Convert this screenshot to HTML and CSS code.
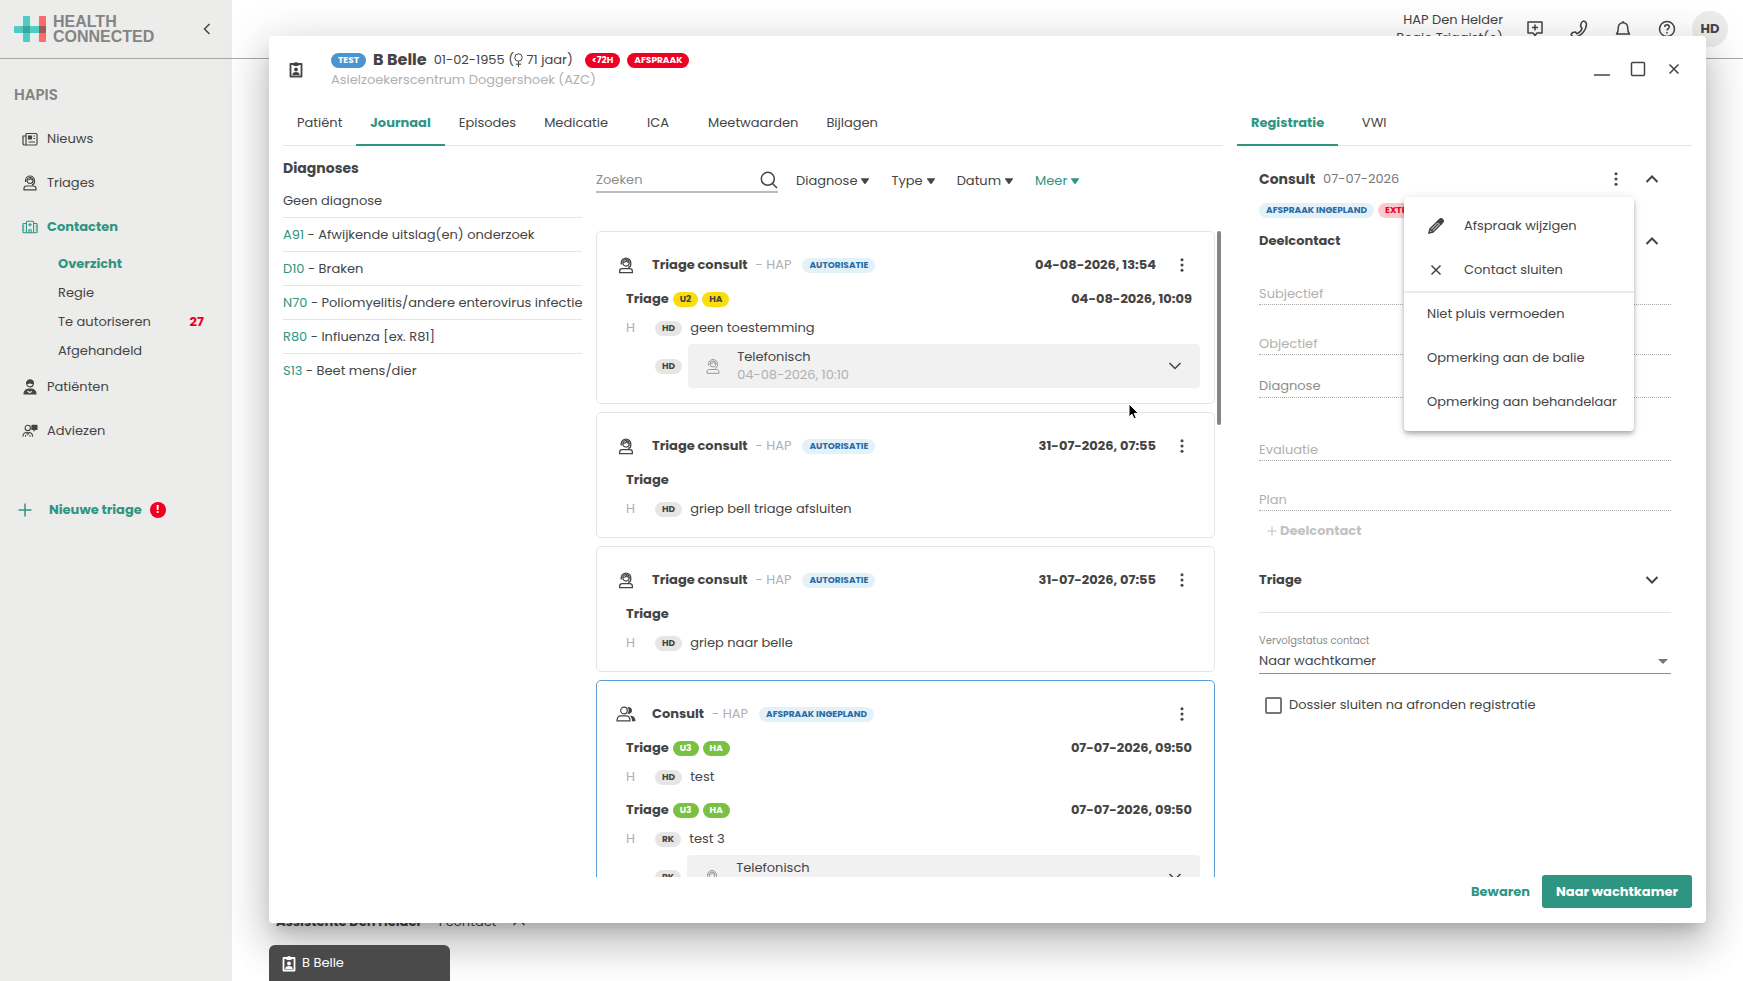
FILE: index.html
```html
<!DOCTYPE html>
<html lang="nl">
<head>
  <meta charset="UTF-8">
  <title>HAPIS - Contacten</title>
  <meta name="viewport" content="width=device-width, initial-scale=1.0">
  <link rel="stylesheet" href="styles.css">
</head>
<body>

  <!-- iconen -->
  <svg class="sprite" aria-hidden="true">
    <symbol id="i-news" viewBox="0 0 16 16"><path d="M4 2.500h10a1 1 0 0 1 1 1v9a1.500 1.500 0 0 1-1.500 1.500H2.500A1.500 1.500 0 0 1 1 12.500V5h3M4 2.500v10a1.500 1.500 0 0 1-1.500 1.500"/><path d="M6.500 5h3v3h-3z" fill="currentColor"/><path d="M11.500 5H13M11.500 7.500H13M6.500 11H13"/></symbol>
    <symbol id="i-agent" viewBox="0 0 16 16"><circle cx="8" cy="5.500" r="3"/><path d="M3.500 7V5.500a4.500 4.500 0 0 1 9 0V7c0 1.500-1 2.500-2.500 2.800M5.200 5C7 5 8 4.500 8.500 3.500c.5 1 1.200 1.500 2.300 1.500M2 14.800v-1.300c0-1.600 1-2.500 2.500-2.500h7c1.500 0 2.500.9 2.500 2.500v1.300z"/></symbol>
    <symbol id="i-hospital" viewBox="0 0 18 16"><path d="M5 14.500v-12a1 1 0 0 1 1-1h6a1 1 0 0 1 1 1v12M5 4H2a1 1 0 0 0-1 1v8.500a1 1 0 0 0 1 1h14a1 1 0 0 0 1-1V5a1 1 0 0 0-1-1h-3M9 3.500v4M7 5.500h4M7.800 14.500V11h2.400v3.500M1 7h1.500M1 9.500h1.500M1 12h1.500M17 7h-1.500M17 9.500h-1.500M17 12h-1.500"/></symbol>
    <symbol id="i-patient" viewBox="0 0 16 16"><circle cx="8" cy="4.500" r="3.300"/><path d="M4.700 4.500C4.700 2.400 6 1.200 8 1.200s3.300 1.200 3.300 3.300C9 4.500 8 3.500 8 3c0 .6-1.500 1.500-3.300 1.500z" fill="currentColor"/><path d="M2 15c0-3 2-5 6-5s6 2 6 5z" fill="currentColor"/><path d="M5.500 12l2 1.500 2.500-1" stroke="#ececea"/></symbol>
    <symbol id="i-advice" viewBox="0 0 18 16"><circle cx="6.500" cy="4.500" r="3"/><path d="M1 14.500c0-3 1.800-5 5.500-5s5.500 2 5.500 5M4 14.500v-2M9 14.500v-2M5 10l1.500 2L8 10"/><path d="M11.500 1h5a1 1 0 0 1 1 1v4a1 1 0 0 1-1 1H15l-2 2V7h-1.500a1 1 0 0 1-1-1V2a1 1 0 0 1 1-1z" fill="currentColor" stroke="none"/></symbol>
    <symbol id="i-badge" viewBox="0 0 14 17"><path d="M1.500 3h11v12.500h-11z" stroke-width="1.800" stroke-linejoin="round"/><path d="M4.500 1.800h1.200a1.500 1.500 0 0 1 2.600 0h1.200V5h-5z" fill="currentColor" stroke="none"/><circle cx="7" cy="8.500" r="1.900" fill="currentColor" stroke="none"/><path d="M3.300 14c0-2 1.300-3 3.700-3s3.700 1 3.700 3z" fill="currentColor" stroke="none"/></symbol>
    <symbol id="i-people" viewBox="0 0 20 16"><circle cx="8" cy="4.500" r="3.300"/><path d="M1 14.800c0-3.500 1.500-5 4-5h5c2.500 0 4 1.500 4 5z"/><path d="M11.500 1c2.500-.3 4.500 1 4.500 3.500S14 8.300 11.500 8c1.500-2 1.500-5 0-7zM14 9.800c3.500 0 5.500 1.800 5.500 5.500H16c0-2.500-.5-4-2-5.500z" fill="currentColor" stroke="none"/></symbol>
    <symbol id="i-up" viewBox="0 0 14 8"><path d="M1.500 7L7 1.500 12.500 7"/></symbol>
    <symbol id="i-down" viewBox="0 0 14 8"><path d="M1.500 1L7 6.500 12.500 1"/></symbol>
    <symbol id="i-left" viewBox="0 0 8 14"><path d="M6.500 2L1.500 7l5 5"/></symbol>
    <symbol id="i-dots" viewBox="0 0 4 14"><g fill="currentColor" stroke="none"><circle cx="2" cy="1.700" r="1.500"/><circle cx="2" cy="7" r="1.500"/><circle cx="2" cy="12.300" r="1.500"/></g></symbol>
    <symbol id="i-close" viewBox="0 0 12 12"><path d="M1.500 1.500l9 9M10.500 1.500l-9 9"/></symbol>
    <symbol id="i-plus" viewBox="0 0 14 14"><path d="M7 .5v13M.5 7h13"/></symbol>
    <symbol id="i-search" viewBox="0 0 18 18"><circle cx="7.800" cy="7.800" r="6.500"/><path d="M12.500 12.500l4.500 4.500"/></symbol>
    <symbol id="i-caret" viewBox="0 0 8 6"><path d="M0 .5h8L4.600 5.500a.8.8 0 0 1-1.200 0z" fill="currentColor" stroke="currentColor" stroke-width=".5"/></symbol>
    <symbol id="i-pencil" viewBox="0 0 16 16"><path d="M1 15l1-4 8-8 3 3-8 8zM4 12l6.500-6.500M2 11l3 3"/><path d="M10 3l1.500-1.500a2 2 0 0 1 3 3L13 6z" fill="currentColor"/></symbol>
    <symbol id="i-message" viewBox="0 0 18 18"><path d="M2 2h14v11h-5l-2 2.500L7 13H2zM9 4.500v6M6 7.500h6" stroke-linejoin="round"/></symbol>
    <symbol id="i-phone" viewBox="0 0 18 18"><path d="M11.500 2.500l2-1.500c1.500.3 2.800 1.500 3 3C16 11 11 16.500 4 17c-1.500-.3-2.500-1.300-3-2.500l1.500-2 3-.5 1.500 1.800c2.500-1 4.200-3 5-5.300L10.500 6z" stroke-linejoin="round"/></symbol>
    <symbol id="i-bell" viewBox="0 0 18 18"><path d="M9 1v1.500M2.500 14c1.500-1.500 1.800-3 1.800-6A4.700 4.700 0 0 1 9 2.800 4.700 4.700 0 0 1 13.700 8c0 3 .3 4.500 1.800 6zM7 16.500c1 .8 3 .8 4 0" stroke-linejoin="round"/></symbol>
    <symbol id="i-help" viewBox="0 0 18 18"><circle cx="9" cy="9" r="7.500"/><path d="M6.700 7c0-3 4.600-3 4.600 0 0 1.500-2.300 1.800-2.300 3.500M9 12v1.500"/></symbol>
  </svg>

  <div class="app">
    <aside class="sidebar">
      <div class="brand">
        <svg class="logo" viewBox="0 0 33 26">
          <rect x="9" width="7" height="26" rx="1" fill="#4ecdc4"/>
          <rect x="25" width="7" height="26" rx="1" fill="#fb6a6c"/>
          <rect y="10" width="32" height="7" rx="1" fill="#4ecdc4"/>
          <rect x="9" y="10" width="7" height="7" fill="#3ba699"/>
          <rect x="25" y="10" width="7" height="7" fill="#a1595b"/>
        </svg>
        <span class="brand-name">HEALTH<br>CONNECTED</span>
        <button class="icon-btn collapse" aria-label="Menu inklappen"><svg width="8" height="14"><use href="#i-left"/></svg></button>
      </div>
      <h1>HAPIS</h1>
      <nav>
        <a class="nav-item" href="#"><svg width="16" height="16"><use href="#i-news"/></svg>Nieuws</a>
        <a class="nav-item" href="#"><svg width="16" height="16"><use href="#i-agent"/></svg>Triages</a>
        <a class="nav-item active" href="#"><svg width="16" height="16"><use href="#i-hospital"/></svg>Contacten</a>
        <a class="nav-sub active" href="#">Overzicht</a>
        <a class="nav-sub" href="#">Regie</a>
        <a class="nav-sub" href="#">Te autoriseren <b>27</b></a>
        <a class="nav-sub" href="#">Afgehandeld</a>
        <a class="nav-item" href="#"><svg width="16" height="16"><use href="#i-patient"/></svg>Patiënten</a>
        <a class="nav-item" href="#"><svg width="16" height="16"><use href="#i-advice"/></svg>Adviezen</a>
      </nav>
      <button class="new-triage"><svg width="14" height="14"><use href="#i-plus"/></svg>Nieuwe triage <span class="alert">!</span></button>
    </aside>

    <main class="main">
      <header class="topbar">
        <div class="user">HAP Den Helder<br>Regie Triagist(e)</div>
        <button class="icon-btn" aria-label="Bericht"><svg width="18" height="18"><use href="#i-message"/></svg></button>
        <button class="icon-btn" aria-label="Telefoon"><svg width="18" height="18"><use href="#i-phone"/></svg></button>
        <button class="icon-btn" aria-label="Meldingen"><svg width="18" height="18"><use href="#i-bell"/></svg></button>
        <button class="icon-btn" aria-label="Help"><svg width="18" height="18"><use href="#i-help"/></svg></button>
        <button class="avatar">HD</button>
      </header>
      <div class="group"><strong>Assistente Den Helder</strong><span>1 contact</span><svg width="14" height="8"><use href="#i-up"/></svg></div>
      <div class="taskbar">
        <button class="task"><svg width="14" height="17"><use href="#i-badge"/></svg>B Belle</button>
      </div>
    </main>
  </div>

  <section class="dialog" role="dialog" aria-label="Dossier B Belle">
    <header class="dialog-head">
      <svg width="14" height="17"><use href="#i-badge"/></svg>
      <div class="patient">
        <div class="patient-line">
          <span class="pill test">TEST</span>
          <h2>B Belle</h2>
          <span class="birth">01-02-1955 (<svg width="9" height="15" viewBox="0 0 9 15"><circle cx="4.500" cy="4.500" r="3.700"/><path d="M4.500 8.200V14M1.800 11.200h5.400"/></svg> 71 jaar)</span>
          <span class="pill red">&lt;72H</span>
          <span class="pill red">AFSPRAAK</span>
        </div>
        <p class="address">Asielzoekerscentrum Doggershoek (AZC)</p>
      </div>
      <div class="window-btns">
        <button class="icon-btn" aria-label="Minimaliseren"><svg width="16" height="16" viewBox="0 0 16 16"><path d="M0 14h16"/></svg></button>
        <button class="icon-btn" aria-label="Maximaliseren"><svg width="16" height="16" viewBox="0 0 16 16"><rect x="1.500" y="1.500" width="13" height="13" rx="1"/></svg></button>
        <button class="icon-btn" aria-label="Sluiten"><svg width="12" height="12"><use href="#i-close"/></svg></button>
      </div>
    </header>

    <div class="dialog-body">
      <div class="dossier">
        <div class="tabs">
          <button class="tab">Patiënt</button>
          <button class="tab active">Journaal</button>
          <button class="tab">Episodes</button>
          <button class="tab">Medicatie</button>
          <button class="tab">ICA</button>
          <button class="tab">Meetwaarden</button>
          <button class="tab">Bijlagen</button>
        </div>
        <div class="journal">
          <div class="diagnoses">
            <h3>Diagnoses</h3>
            <ul>
              <li>Geen diagnose</li>
              <li><a href="#">A91</a> - Afwijkende uitslag(en) onderzoek</li>
              <li><a href="#">D10</a> - Braken</li>
              <li><a href="#">N70</a> - Poliomyelitis/andere enterovirus infectie</li>
              <li><a href="#">R80</a> - Influenza [ex. R81]</li>
              <li><a href="#">S13</a> - Beet mens/dier</li>
            </ul>
          </div>

          <div class="timeline">
            <div class="filters">
              <label class="search">
                <input type="text" placeholder="Zoeken" aria-label="Zoeken">
                <svg width="18" height="18"><use href="#i-search"/></svg>
              </label>
              <button class="filter">Diagnose<svg width="8" height="6"><use href="#i-caret"/></svg></button>
              <button class="filter">Type<svg width="8" height="6"><use href="#i-caret"/></svg></button>
              <button class="filter">Datum<svg width="8" height="6"><use href="#i-caret"/></svg></button>
              <button class="filter more">Meer<svg width="8" height="6"><use href="#i-caret"/></svg></button>
            </div>
            <div class="scroller">
              <div class="cards">
                <article class="card">
                  <header class="card-head">
                    <svg width="20" height="17"><use href="#i-agent"/></svg>
                    <h4>Triage consult</h4><span class="org">- HAP</span><span class="pill info">AUTORISATIE</span>
                    <time>04-08-2026, 13:54</time>
                    <button class="icon-btn" aria-label="Opties"><svg width="4" height="14"><use href="#i-dots"/></svg></button>
                  </header>
                  <div class="triage">
                    <div class="triage-head"><h5>Triage</h5><span class="pill yellow">U2</span><span class="pill yellow">HA</span><time>04-08-2026, 10:09</time></div>
                    <div class="entry"><span class="kind">H</span><span class="pill initials">HD</span>geen toestemming</div>
                    <div class="entry call-row">
                      <span class="kind"></span><span class="pill initials">HD</span>
                      <button class="call"><svg width="16" height="17"><use href="#i-agent"/></svg><span>Telefonisch<small>04-08-2026, 10:10</small></span><svg width="14" height="8"><use href="#i-down"/></svg></button>
                    </div>
                  </div>
                </article>

                <article class="card">
                  <header class="card-head">
                    <svg width="20" height="17"><use href="#i-agent"/></svg>
                    <h4>Triage consult</h4><span class="org">- HAP</span><span class="pill info">AUTORISATIE</span>
                    <time>31-07-2026, 07:55</time>
                    <button class="icon-btn" aria-label="Opties"><svg width="4" height="14"><use href="#i-dots"/></svg></button>
                  </header>
                  <div class="triage">
                    <div class="triage-head"><h5>Triage</h5></div>
                    <div class="entry"><span class="kind">H</span><span class="pill initials">HD</span>griep bell triage afsluiten</div>
                  </div>
                </article>

                <article class="card">
                  <header class="card-head">
                    <svg width="20" height="17"><use href="#i-agent"/></svg>
                    <h4>Triage consult</h4><span class="org">- HAP</span><span class="pill info">AUTORISATIE</span>
                    <time>31-07-2026, 07:55</time>
                    <button class="icon-btn" aria-label="Opties"><svg width="4" height="14"><use href="#i-dots"/></svg></button>
                  </header>
                  <div class="triage">
                    <div class="triage-head"><h5>Triage</h5></div>
                    <div class="entry"><span class="kind">H</span><span class="pill initials">HD</span>griep naar belle</div>
                  </div>
                </article>

                <article class="card current">
                  <header class="card-head">
                    <svg width="20" height="16"><use href="#i-people"/></svg>
                    <h4>Consult</h4><span class="org">- HAP</span><span class="pill info">AFSPRAAK INGEPLAND</span>
                    <time></time>
                    <button class="icon-btn" aria-label="Opties"><svg width="4" height="14"><use href="#i-dots"/></svg></button>
                  </header>
                  <div class="triage">
                    <div class="triage-head"><h5>Triage</h5><span class="pill green">U3</span><span class="pill green">HA</span><time>07-07-2026, 09:50</time></div>
                    <div class="entry"><span class="kind">H</span><span class="pill initials">HD</span>test</div>
                  </div>
                  <div class="triage">
                    <div class="triage-head"><h5>Triage</h5><span class="pill green">U3</span><span class="pill green">HA</span><time>07-07-2026, 09:50</time></div>
                    <div class="entry"><span class="kind">H</span><span class="pill initials">RK</span>test 3</div>
                    <div class="entry call-row">
                      <span class="kind"></span><span class="pill initials">RK</span>
                      <button class="call"><svg width="16" height="17"><use href="#i-agent"/></svg><span>Telefonisch<small>07-07-2026, 09:50</small></span><svg width="14" height="8"><use href="#i-down"/></svg></button>
                    </div>
                  </div>
                </article>
              </div>
              <div class="scrollbar"></div>
            </div>
          </div>
        </div>
      </div>

      <div class="registration">
        <div class="tabs">
          <button class="tab active">Registratie</button>
          <button class="tab">VWI</button>
        </div>
        <form class="form">
          <div class="form-head title">
            <h3>Consult</h3><span>07-07-2026</span>
            <div class="menu-anchor">
              <button type="button" class="icon-btn" aria-label="Opties"><svg width="4" height="14"><use href="#i-dots"/></svg></button>
              <div class="menu">
                <button type="button"><svg width="16" height="16"><use href="#i-pencil"/></svg>Afspraak wijzigen</button>
                <button type="button"><svg width="16" height="12"><use href="#i-close"/></svg>Contact sluiten</button>
                <hr>
                <button type="button">Niet pluis vermoeden</button>
                <button type="button">Opmerking aan de balie</button>
                <button type="button">Opmerking aan behandelaar</button>
              </div>
            </div>
            <button type="button" class="icon-btn toggle" aria-label="Inklappen"><svg width="14" height="8"><use href="#i-up"/></svg></button>
          </div>
          <div class="form-tags"><span class="pill info">AFSPRAAK INGEPLAND</span><span class="pill extra">EXTRA</span></div>
          <div class="form-head">
            <h4>Deelcontact</h4>
            <button type="button" class="icon-btn toggle" aria-label="Inklappen"><svg width="14" height="8"><use href="#i-up"/></svg></button>
          </div>
          <input class="line" type="text" placeholder="Subjectief" aria-label="Subjectief">
          <input class="line" type="text" placeholder="Objectief" aria-label="Objectief">
          <input class="line diagnose" type="text" placeholder="Diagnose" aria-label="Diagnose">
          <input class="line evaluatie" type="text" placeholder="Evaluatie" aria-label="Evaluatie">
          <input class="line" type="text" placeholder="Plan" aria-label="Plan">
          <button type="button" class="add" disabled><svg width="10" height="10"><use href="#i-plus"/></svg>Deelcontact</button>
          <div class="form-head triage-toggle">
            <h4>Triage</h4>
            <button type="button" class="icon-btn toggle" aria-label="Uitklappen"><svg width="14" height="8"><use href="#i-down"/></svg></button>
          </div>
          <label class="status-label" for="status">Vervolgstatus contact</label>
          <div class="select">
            <select id="status"><option>Naar wachtkamer</option></select>
          </div>
          <label class="check"><input type="checkbox">Dossier sluiten na afronden registratie</label>
        </form>
      </div>
    </div>

    <footer class="dialog-foot">
      <button class="btn-text">Bewaren</button>
      <button class="btn">Naar wachtkamer</button>
    </footer>
  </section>

  <svg class="cursor" width="12" height="18" viewBox="0 0 12 18"><path d="M1 1v13l3-2.800 2 4.600 2.200-1-2-4.400h4.200z"/></svg>

</body>
</html>
```
FILE: styles.css
```css
:root {
  --teal: #2f9583;
  --text: #444;
  --grey: #b0b0b0;
  --line: #e3e6e8;
  --red: #ee0023;
  --font: 'Poppins', 'Inter', sans-serif;
}

* {
  box-sizing: border-box;
}

body {
  margin: 0;
  height: 100vh;
  overflow: hidden;
  font-family: var(--font);
  font-size: 13px;
  line-height: 18px;
  color: var(--text);
  background: #fff;
}

h1, h2, h3, h4, h5, p, ul {
  margin: 0;
  padding: 0;
  font-size: 13px;
}

a {
  color: var(--teal);
  text-decoration: none;
}

button, input, select {
  margin: 0;
  padding: 0;
  border: 0;
  border-radius: 0;
  background: none;
  font: inherit;
  color: inherit;
  outline: 0;
}

svg {
  flex: none;
  fill: none;
  stroke: currentColor;
  stroke-width: 1.5;
}

.sprite {
  position: absolute;
  width: 0;
  height: 0;
}

.icon-btn {
  display: flex;
  align-items: center;
  justify-content: center;
  width: 24px;
  height: 24px;
}

/* sidebar */
.app {
  display: flex;
  height: 100%;
}

.sidebar {
  width: 232px;
  flex: none;
  background: #ececea;
}

.brand {
  display: flex;
  align-items: center;
  height: 59px;
  padding: 0 13px 0 14px;
  border-bottom: 1px solid #a8a8a8;
}

.logo {
  width: 33px;
  height: 26px;
  stroke: none;
}

.brand-name {
  margin-left: 6px;
  font: bold 16px/15px 'Liberation Sans', Arial, sans-serif;
  color: #858383;
}

.collapse {
  margin-left: auto;
}

.sidebar h1 {
  padding: 24px 14px 11px;
  font-size: 15px;
  line-height: 23px;
  font-weight: 600;
  color: #858383;
}

.nav-item {
  display: flex;
  align-items: center;
  gap: 9px;
  height: 44px;
  padding-left: 22px;
  color: var(--text);
}

.nav-item svg {
  stroke-width: 1.2;
}

.nav-sub {
  display: flex;
  justify-content: space-between;
  padding: 0 28px 0 58px;
  line-height: 29px;
  color: var(--text);
}

.nav-sub b {
  color: var(--red);
}

.nav-item.active,
.nav-sub.active {
  color: var(--teal);
  font-weight: 700;
}

.new-triage {
  display: flex;
  align-items: center;
  height: 44px;
  margin-top: 35px;
  padding-left: 18px;
  gap: 8px;
  color: var(--teal);
  font-weight: 700;
}

.new-triage svg {
  margin-right: 9px;
}

.alert {
  width: 16px;
  height: 16px;
  border-radius: 50%;
  background: var(--red);
  color: #fff;
  font-size: 10px;
  line-height: 16px;
  text-align: center;
}

/* pagina achter het dossier */
.main {
  flex: 1;
  min-width: 0;
  display: flex;
  flex-direction: column;
}

.topbar {
  display: flex;
  align-items: center;
  justify-content: flex-end;
  gap: 20px;
  height: 59px;
  padding-right: 15px;
  border-bottom: 1px solid #a8a8a8;
}

.user {
  text-align: right;
}

.avatar {
  width: 36px;
  height: 36px;
  margin-left: -7px;
  border-radius: 50%;
  background: #ececec;
  font-weight: 700;
}

.group {
  display: flex;
  align-items: center;
  gap: 16px;
  margin-top: auto;
  padding: 0 44px 14px;
}

.taskbar {
  position: relative;
  z-index: 2;
  padding-left: 37px;
}

.task {
  display: flex;
  align-items: center;
  gap: 6px;
  width: 181px;
  height: 36px;
  padding-left: 13px;
  border-radius: 6px 6px 0 0;
  background: #4a4a4a;
  color: #fff;
}

/* dossier */
.dialog {
  position: absolute;
  top: 36px;
  right: 37px;
  bottom: 58px;
  left: 269px;
  z-index: 1;
  display: flex;
  flex-direction: column;
  padding: 0 14px;
  border-radius: 4px;
  background: #fff;
  box-shadow: 0 11px 15px -7px rgba(0, 0, 0, .2), 0 24px 38px 3px rgba(0, 0, 0, .14), 0 9px 46px 8px rgba(0, 0, 0, .12);
}

.dialog-head {
  display: flex;
  align-items: center;
  height: 66px;
  padding-left: 6px;
}

.patient {
  margin-left: 28px;
}

.patient-line {
  display: flex;
  align-items: center;
  gap: 7px;
  height: 22px;
}

.patient h2 {
  font-size: 16px;
  font-weight: 700;
}

.birth {
  display: flex;
  align-items: center;
  margin-right: 5px;
  white-space: pre;
}

.birth svg {
  stroke-width: 1;
}

.address {
  color: var(--grey);
}

.pill {
  height: 15px;
  padding: 0 7px;
  border-radius: 8px;
  font-size: 9px;
  line-height: 15px;
  font-weight: 700;
  white-space: nowrap;
}

.test {
  background: #4a94d0;
  color: #fff;
}

.red {
  background: var(--red);
  color: #fff;
}

.info {
  background: #e3f1f9;
  color: #2c69a5;
}

.extra {
  background: #fcc9d0;
  color: var(--red);
}

.yellow {
  background: #fadd0c;
}

.green {
  background: #7ac143;
  color: #fff;
}

.initials {
  background: #e6e6e6;
}

.window-btns {
  display: flex;
  gap: 12px;
  margin-left: auto;
  padding-right: 6px;
}

.dialog-body {
  flex: 1;
  min-height: 0;
  display: grid;
  grid-template-columns: minmax(0, 1fr) 455px;
  gap: 14px;
}

.dossier {
  min-height: 0;
  display: flex;
  flex-direction: column;
}

.tabs {
  display: flex;
  height: 44px;
  border-bottom: 1px solid var(--line);
}

.tab {
  min-width: 72px;
  height: 44px;
  padding: 0 14px;
  border-bottom: 2px solid transparent;
}

.tab.active {
  border-color: var(--teal);
  color: var(--teal);
  font-weight: 700;
}

.journal {
  flex: 1;
  min-height: 0;
  display: grid;
  grid-template-columns: 299px minmax(0, 1fr);
  gap: 14px;
}

.diagnoses h3 {
  padding: 10px 0 4px;
  font-size: 14px;
  line-height: 24px;
  font-weight: 700;
}

.diagnoses ul {
  list-style: none;
}

.diagnoses li {
  height: 34px;
  line-height: 33px;
  white-space: nowrap;
  border-bottom: 1px solid var(--line);
}

.diagnoses li:last-child {
  border-bottom: 0;
}

.timeline {
  min-height: 0;
  display: flex;
  flex-direction: column;
}

.filters {
  display: flex;
  gap: 22px;
  padding: 21px 0 36px;
}

.search {
  display: flex;
  width: 182px;
  height: 26px;
  margin-right: -4px;
  padding-top: 4px;
  border-bottom: 2px solid #bbb;
}

.search input {
  flex: 1;
  min-width: 0;
  height: 18px;
}

.filter {
  display: flex;
  align-items: center;
  gap: 4px;
  height: 28px;
}

.more {
  color: var(--teal);
}

::placeholder {
  color: var(--grey);
  opacity: 1;
}

.search ::placeholder,
.diagnose::placeholder {
  color: #8c8c8c;
}

.scroller {
  flex: 1;
  min-height: 0;
  display: flex;
  gap: 2px;
  padding-right: 2px;
  overflow: hidden;
}

.cards {
  flex: 1;
  display: flex;
  flex-direction: column;
  gap: 8px;
}

.scrollbar {
  width: 4px;
  height: 30%;
  border-radius: 2px;
  background: #858585;
}

.card {
  flex: none;
  padding: 15px 14px 15px 19px;
  border: 1px solid var(--line);
  border-radius: 5px;
}

.card.current {
  border-color: #5b9fd6;
}

.card-head {
  display: flex;
  align-items: center;
  height: 36px;
}

.card-head h4 {
  margin-left: 16px;
  font-weight: 700;
}

.card-head svg {
  stroke-width: 1.2;
}

.org {
  margin: 0 11px 0 8px;
  color: var(--grey);
}

.card time {
  margin-left: auto;
  font-weight: 700;
}

.card-head .icon-btn {
  margin: 0 6px 0 14px;
}

.triage {
  padding-left: 10px;
}

.triage + .triage {
  margin-top: 4px;
}

.triage-head {
  display: flex;
  align-items: center;
  gap: 4px;
  height: 32px;
  padding-right: 8px;
}

.triage-head h5 {
  font-weight: 700;
}

.entry {
  display: flex;
  align-items: center;
  height: 26px;
}

.entry .pill {
  margin-right: 8px;
}

.kind {
  width: 29px;
  color: var(--grey);
}

.entry.call-row {
  height: 44px;
  margin-top: 3px;
}

.call-row .pill {
  margin-right: 6px;
}

.call {
  flex: 1;
  display: flex;
  align-items: center;
  height: 44px;
  padding: 0 18px 0 17px;
  border-radius: 4px;
  background: #f1f1f1;
  text-align: left;
}

.call span {
  flex: 1;
  margin-left: 16px;
}

.call small {
  display: block;
  font-size: 13px;
  color: var(--grey);
}

.call svg:first-child {
  color: #999;
  stroke-width: 1;
}

/* registratie */
.form {
  padding: 16px 21px 0 22px;
}

.form-head {
  display: flex;
  align-items: center;
  height: 28px;
}

.form-head h4 {
  font-weight: 700;
}

.form-head.title {
  height: 34px;
}

.title h3 {
  margin-right: 8px;
  font-size: 14px;
  font-weight: 700;
}

.title span {
  color: #777;
}

.menu-anchor {
  position: relative;
  margin-left: auto;
}

.menu-anchor + .toggle {
  margin-left: 12px;
}

.toggle {
  margin-left: auto;
  margin-right: 7px;
}

.toggle svg {
  stroke-width: 2;
}

.menu {
  position: absolute;
  top: 30px;
  right: -6px;
  z-index: 3;
  width: 230px;
  padding: 7px 0;
  border-radius: 4px;
  background: #fff;
  box-shadow: 0 2px 4px -1px rgba(0, 0, 0, .2), 0 4px 5px 0 rgba(0, 0, 0, .14), 0 1px 10px 0 rgba(0, 0, 0, .12);
}

.menu button {
  display: flex;
  align-items: center;
  gap: 20px;
  width: 100%;
  height: 44px;
  padding-left: 23px;
  white-space: nowrap;
}

.menu button:has(svg) {
  padding-left: 24px;
}

.menu hr {
  height: 2px;
  margin: -1px 0;
  border: 0;
  background: #ececec;
}

.form-tags {
  display: flex;
  gap: 4px;
  margin: 7px 0 9px;
}

.line {
  display: block;
  width: 100%;
  height: 24px;
  margin-top: 26px;
  padding-top: 2px;
  border-bottom: 1px dotted #aaa;
}

.line.diagnose {
  margin-top: 19px;
  padding-top: 0;
}

.line.evaluatie {
  margin-top: 39px;
}

.add {
  display: flex;
  align-items: center;
  gap: 3px;
  height: 28px;
  margin: 6px 0 21px 8px;
  color: #c2c2c2;
  font-weight: 700;
}

.triage-toggle {
  height: 47px;
  padding-bottom: 18px;
  border-bottom: 1px solid var(--line);
}

.status-label {
  display: block;
  margin-top: 20px;
  font-size: 10px;
  line-height: 16px;
  color: #8c8c8c;
}

.select {
  position: relative;
}

.select select {
  width: 100%;
  height: 25px;
  border-bottom: 1px solid #8c8c8c;
  appearance: none;
}

.select::after {
  content: '';
  position: absolute;
  top: 10px;
  right: 3px;
  border: 5px solid transparent;
  border-top-color: #777;
  border-bottom: 0;
  pointer-events: none;
}

.check {
  display: flex;
  align-items: center;
  gap: 7px;
  margin-top: 22px;
  padding-left: 6px;
}

.check input {
  width: 17px;
  height: 17px;
  border: 2px solid #777;
  border-radius: 2px;
  appearance: none;
}

.dialog-foot {
  display: flex;
  justify-content: flex-end;
  gap: 12px;
  margin-top: -2px;
  padding-bottom: 15px;
}

.btn-text,
.btn {
  height: 33px;
  color: var(--teal);
  font-weight: 700;
}

.btn {
  padding: 0 14px;
  border-radius: 3px;
  background: var(--teal);
  color: #fff;
}

.cursor {
  position: absolute;
  top: 403px;
  left: 1128px;
  z-index: 4;
  fill: #000;
  stroke: #fff;
  stroke-width: 1;
}
```
